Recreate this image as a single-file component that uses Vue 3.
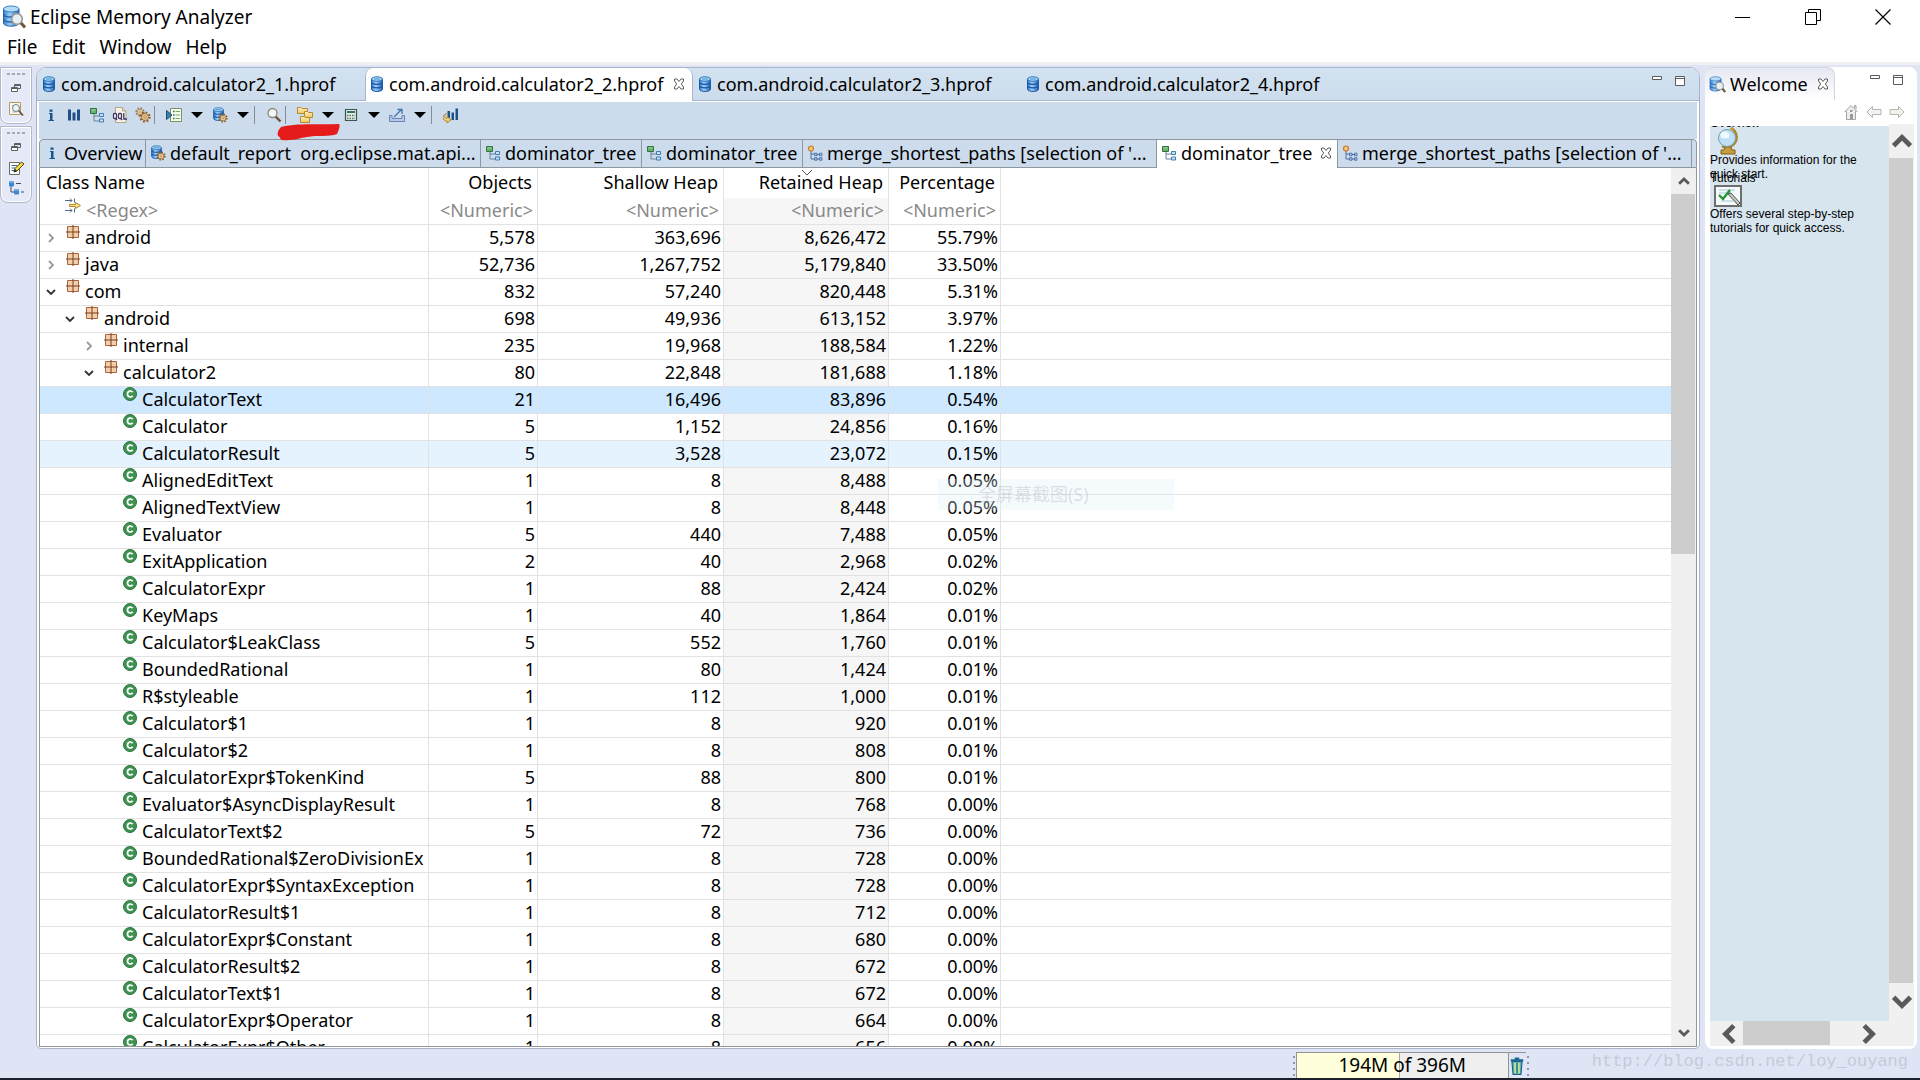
<template>
  <div class="workbench">
    <svg class="sprite" aria-hidden="true">
      <defs>
        <linearGradient id="blue" x1="0" x2="1" y1="0" y2="0">
          <stop offset="0" stop-color="#2f7fd0" />
          <stop offset="0.4" stop-color="#9fd0f5" />
          <stop offset="1" stop-color="#1c5fb8" />
        </linearGradient>
        <linearGradient id="gold" x1="0" x2="0" y1="0" y2="1">
          <stop offset="0" stop-color="#fff3c4" />
          <stop offset="1" stop-color="#edc55c" />
        </linearGradient>
      </defs>
      <symbol id="db" viewBox="0 0 14 16">
        <path d="M1.5 3v10c0 1.500 2.500 2.500 5.500 2.500s5.500-1 5.500-2.500V3z" fill="url(#blue)" stroke="#1d5ca8" />
        <path d="M1.500 6c0 1.500 2.500 2.300 5.500 2.300s5.500-.8 5.500-2.300M1.500 9.500c0 1.500 2.500 2.300 5.500 2.300s5.500-.8 5.500-2.300" fill="none" stroke="#1b55a4" stroke-width="1.200" />
        <ellipse cx="7" cy="3" rx="5.500" ry="2.200" fill="#a9d8f6" stroke="#2f78be" />
        <path d="M4 3h6" stroke="#4d93cc" />
      </symbol>
      <symbol id="dbsearch" viewBox="0 0 24 24">
        <path d="M1.500 4v14c0 2 3.500 3.200 7.500 3.200s8-1.200 8-3.200V4z" fill="url(#blue)" stroke="#2864ad" />
        <path d="M1.500 9c0 2 3.500 3 7.500 3s8-1 8-3M1.500 14c0 2 3.500 3 7.500 3s8-1 8-3" fill="none" stroke="#2560ab" stroke-width="1.400" />
        <ellipse cx="9.200" cy="4" rx="7.800" ry="3" fill="#b4dcf6" stroke="#3a7fc0" />
        <circle cx="15" cy="14" r="5.300" fill="#e6f0f6" stroke="#9b9c96" stroke-width="1.700" />
        <path d="M19 18l4 4.500" stroke="#6c5a38" stroke-width="3" />
      </symbol>
      <symbol id="info" viewBox="0 0 16 16">
        <path d="M6 6h3.500v7H11v1H5.500v-1H7V7H6zM6.500 2.500h3v2.200h-3z" fill="#15568f" />
      </symbol>
      <symbol id="bars" viewBox="0 0 16 16">
        <path d="M2 2.500h3v11H2zM6.500 5.500h3v8h-3zM11 2.500h3v11h-3z" fill="#1e4f86" />
      </symbol>
      <symbol id="tree" viewBox="0 0 16 16">
        <path d="M5 7v7h5M5 9h5" fill="none" stroke="#6a7f95" />
        <path d="M1.500 1.500h6v5h-6z" fill="#62b06a" stroke="#33733c" />
        <path d="M2.500 2.500h4v1h-4z" fill="#a9dcab" />
        <path d="M10.500 6.500h4v3h-4zM10.500 12h4v3h-4z" fill="#c9e2f6" stroke="#3f7db7" />
      </symbol>
      <symbol id="paths" viewBox="0 0 16 16">
        <path d="M4 6v8h4M4 9h4" fill="none" stroke="#4b6c9e" />
        <circle cx="4" cy="3.500" r="2.500" fill="#f7c684" stroke="#c97a24" stroke-width="1.200" />
        <path d="M10 9.500h4M10 14h4" stroke="#3f65a3" />
        <path d="M7.500 8.200h2.500v2.500H7.500zM12.500 8.200H15v2.500h-2.500zM7.500 12.700h2.500v2.500H7.500zM12.500 12.700H15v2.500h-2.500z" fill="#a9c2e2" stroke="#3f65a3" stroke-width=".8" />
      </symbol>
      <symbol id="oql" viewBox="0 0 16 16">
        <path d="M3.500.5h7l3.500 3.500v11.500h-10.500z" fill="#f6f4ea" stroke="#b5a783" />
        <path d="M10.500.5v3.500H14" fill="#e8dab5" stroke="#b5a783" />
        <rect x="1.500" y="6.500" width="3" height="5" rx="1" fill="#fff" stroke="#3f3565" stroke-width="1.300" />
        <rect x="6.500" y="6.500" width="3" height="5" rx="1" fill="#fff" stroke="#3f3565" stroke-width="1.300" />
        <path d="M3.500 11l1.500 2M8.500 11l1.500 2M11.800 6v6H15" fill="none" stroke="#3f3565" stroke-width="1.300" />
      </symbol>
      <symbol id="gear" viewBox="0 0 16 16">
        <circle cx="8" cy="8" r="6.200" fill="none" stroke="#8a5a23" stroke-width="2.600" stroke-dasharray="2.400 2.470" />
        <circle cx="8" cy="8" r="4.600" fill="#f6d9a0" stroke="#96622a" stroke-width="1.300" />
        <circle cx="8" cy="8" r="1.700" fill="#fff" stroke="#8a5a23" />
      </symbol>
      <symbol id="gears" viewBox="0 0 16 16">
        <use href="#gear" width="10" height="10" opacity=".8" />
        <use href="#gear" x="4" y="4" width="12" height="12" />
      </symbol>
      <symbol id="dbgear" viewBox="0 0 16 16">
        <use href="#db" width="13" height="14" />
        <use href="#gear" x="6" y="6" width="10" height="10" />
      </symbol>
      <symbol id="run" viewBox="0 0 16 16">
        <path d="M4.500 1.500h11v13h-11z" fill="#f7fbee" stroke="#7c8f66" />
        <path d="M7 4.500h1.500M7 8h1.500M7 11.500h1.500" stroke="#2d6e46" stroke-width="1.500" />
        <path d="M9.500 4.500H14M9.500 8H14M9.500 11.500H14" stroke="#69a96b" />
        <path d="M.5 3.500v9L6 8z" fill="#3d7fa6" stroke="#1c4d79" />
      </symbol>
      <symbol id="search" viewBox="0 0 16 16">
        <path d="M9.500 9.500l5 5" stroke="#6d5137" stroke-width="2.400" />
        <circle cx="6.500" cy="6" r="4.500" fill="#f2f7f8" stroke="#8c8870" stroke-width="1.300" />
      </symbol>
      <symbol id="folders" viewBox="0 0 16 16">
        <g fill="url(#gold)" stroke="#b98a2c">
          <path d="M.5.5h3.500l1 1h5.500v5H.5z" />
          <path d="M7.500 4.500h3l1 1h4v5h-8z" />
          <path d="M3.500 9.500h3.500l1 1h4.500v5h-9z" />
        </g>
      </symbol>
      <symbol id="calc" viewBox="0 0 16 16">
        <path d="M2.500 2.500h11v11h-11z" fill="#e3ebde" stroke="#3d5350" stroke-width="1.200" />
        <path d="M4 4h8v2H4z" fill="#34735d" />
        <path d="M4 8.500h8M4 11.500h8" stroke="#50747e" stroke-width="1.500" stroke-dasharray="1.500 1" />
      </symbol>
      <symbol id="export" viewBox="0 0 16 16">
        <path d="M.5 8.500h2.500v3h10v-3h2.500v6H.5z" fill="#b8cae5" stroke="#6885b4" />
        <path d="M5 10l7-7M8.500 2.500H13V7" fill="none" stroke="#4373ac" stroke-width="1.300" />
      </symbol>
      <symbol id="compare" viewBox="0 0 16 16">
        <path d="M4.500 4H7v9H4.500zM8.500 5.500H11V13H8.500zM12.500 1.500H15V13h-2.500z" fill="#1f5189" />
        <path d="M3.500 6.500C1 8 1 11.500 4 11.500V9.500l4 3.500-4 3v-2C-1 14-1 8 3.500 6.500z" fill="url(#gold)" stroke="#b4862c" />
      </symbol>
      <symbol id="close" viewBox="0 0 12 12">
        <path d="M1.500 1h2.500l2 2.500L8 1h2.500v2L8.300 6l2.200 3v2H8L6 8.500 4 11H1.500V9l2.200-3-2.200-3z" fill="#fff" stroke="#5d5d5d" />
      </symbol>
      <symbol id="package" viewBox="0 0 14 14">
        <path d="M1.500 1.500h11v11h-11z" fill="#f2cfaa" stroke="#a8653c" />
        <path d="M7 0v14M0 7h14" stroke="#7a3f20" />
      </symbol>
      <symbol id="class" viewBox="0 0 14 14">
        <circle cx="7" cy="7" r="6.500" fill="#3d9350" stroke="#2b7140" />
        <path d="M9.600 5.200C8.500 3.400 4.500 3.500 4.500 7s4 3.600 5.100 1.800" fill="none" stroke="#fff" stroke-width="1.700" />
      </symbol>
      <symbol id="filter" viewBox="0 0 16 16">
        <path d="M0 2.500h7M0 12.500h7M5 .5l2 2-2 2M5 10.500l2 2-2 2M9.500.5v4M9.500 10.500v4" fill="none" stroke="#51697f" />
        <path d="M4.500 6.500h6V4.500l5 3-5 3v-2h-6z" fill="#fbe389" stroke="#b3862b" />
      </symbol>
      <symbol id="right" viewBox="0 0 10 10"><path d="M3 1l4 4-4 4" fill="none" stroke="#9a9a9a" stroke-width="1.800" /></symbol>
      <symbol id="down" viewBox="0 0 10 10"><path d="M1 3l4 4 4-4" fill="none" stroke="#333" stroke-width="1.800" /></symbol>
      <symbol id="restore" viewBox="0 0 10 10">
        <path d="M3.500 4V1.500h6v4H7M3.500 2.500h6" fill="none" stroke="#5e5e5e" />
        <path d="M.5 4.500h6v4h-6zM.5 5.500h6" fill="#fff" stroke="#5e5e5e" />
      </symbol>
      <symbol id="inspector" viewBox="0 0 16 16">
        <path d="M1.500 1.500h11v12h-11z" fill="#fbfaf2" stroke="#b79a5b" />
        <path d="M4 4.500h6M4 11h5" stroke="#9bb3cc" />
        <circle cx="8" cy="7" r="3.500" fill="#eef4f6" stroke="#6f7f86" />
        <path d="M10.500 9.500l4.500 5" stroke="#6b4d35" stroke-width="1.800" />
      </symbol>
      <symbol id="notes" viewBox="0 0 16 16">
        <path d="M1.500 2.500h10v12h-10z" fill="#fff" stroke="#6c6c58" />
        <path d="M3.500 5.500h6M3.500 8h4M3.500 10.500h3" stroke="#39669a" />
        <path d="M6 12l1-3.500L13.500 2 16 4 9 11z" fill="#f4dc3a" stroke="#4b4625" />
        <path d="M6 12l3-1-2-2z" fill="#222" />
      </symbol>
      <symbol id="navigator" viewBox="0 0 16 16">
        <path d="M3 6v6h3M8 3.500h5M13 12h3" fill="none" stroke="#3f4c60" />
        <rect x="1" y="1" width="5" height="5.500" rx="1" fill="#3d86d0" />
        <rect x="6" y="9" width="5" height="5.500" rx="1" fill="#3d86d0" />
        <path d="M1.500 2h4M6.500 10h4" stroke="#a6d2f2" />
      </symbol>
      <symbol id="home" viewBox="0 0 16 16">
        <path d="M1.500 8L8 1.500 14.500 8M3.500 7v8.500h9V7M11.500 4V1.500h1.500v4" fill="#ededed" stroke="#a3a3a3" />
        <path d="M7 10h3v5H7z" fill="#999" />
        <path d="M7 6h2.500v2H7z" fill="#999" />
      </symbol>
      <symbol id="back" viewBox="0 0 16 16">
        <path d="M1 8l5.500-5.500v3H15v5H6.500v3z" fill="#f1f1ee" stroke="#b5b5b0" />
      </symbol>
      <symbol id="forward" viewBox="0 0 16 16">
        <path d="M15 8L9.500 2.500v3H1v5h8.500v3z" fill="#f1f1ee" stroke="#b5b5b0" />
      </symbol>
      <symbol id="globe" viewBox="0 0 24 28">
        <path d="M15 1c6 3 8 12 2 17-3 3-8 3-11 1" fill="none" stroke="#a6862b" stroke-width="2.400" />
        <path d="M9 20h6l1 3h3v4H5v-4h3z" fill="#c79c3d" stroke="#80601c" />
        <circle cx="11" cy="11" r="8.500" fill="#bfe0f4" stroke="#7d9cab" />
        <ellipse cx="9" cy="8" rx="4.500" ry="3.500" fill="#effaff" />
        <circle cx="16" cy="2" r="1.800" fill="#c79c3d" />
      </symbol>
      <symbol id="tutorial" viewBox="0 0 28 22">
        <path d="M1 1h26v20H1z" fill="#f4fafa" stroke="#6e6e6e" stroke-width="2" />
        <path d="M5 5h16M5 8h12M7 16h12" stroke="#a7cad2" />
        <path d="M5 10l4 4 7-9" fill="none" stroke="#279236" stroke-width="2.400" />
        <path d="M14 9l3-1 9 10-2 2z" fill="#c5c9c4" stroke="#50584f" />
      </symbol>
      <symbol id="trash" viewBox="0 0 12 16">
        <path d="M1.500 4h9l-1 11.500h-7z" fill="#5cb3b0" stroke="#1c5f8c" />
        <path d="M4.300 5v9.500M7.700 5v9.500" stroke="#d7ee8e" stroke-width="1.300" />
        <path d="M6 5v9.500" stroke="#236b8f" />
        <path d="M.5 3h11M4 1.500h4" stroke="#1c6795" stroke-width="2" />
      </symbol>
      <symbol id="min" viewBox="0 0 12 14"><path d="M1.500 2.500h9v3h-9z" fill="#fff" stroke="#5a5a5a" /></symbol>
      <symbol id="max" viewBox="0 0 12 14"><path d="M1.500 2.500h9v9h-9zM1.500 4.500h9" fill="#fff" stroke="#5a5a5a" /></symbol>
      <symbol id="chevron" viewBox="0 0 20 20"><path d="M3 14l7-7 7 7" fill="none" stroke="#5a5a5a" stroke-width="4" /></symbol>
    </svg>

    <header class="title-bar">
      <svg class="app-icon"><use href="#dbsearch" /></svg>
      <h1>Eclipse Memory Analyzer</h1>
      <div class="window-buttons">
        <button aria-label="Minimize"><svg viewBox="0 0 16 16"><path d="M0 8.500h15" stroke="#000" /></svg></button>
        <button aria-label="Restore"><svg viewBox="0 0 16 16"><path d="M.5 3.500h11v12H.5zM3.500 3.500v-3h12v11h-4" fill="none" stroke="#000" /></svg></button>
        <button aria-label="Close"><svg viewBox="0 0 16 16"><path d="M.5.5l15 15M15.500.5l-15 15" stroke="#000" stroke-width="1.200" /></svg></button>
      </div>
    </header>

    <nav class="menu-bar">
      <button v-for="item in menus" :key="item">{{ item }}</button>
    </nav>

    <div class="main">
      <aside class="trim">
        <div v-for="(group, i) in trim" :key="i" class="trim-group">
          <span class="grip"></span>
          <button v-for="icon in group" :key="icon" :aria-label="icon">
            <svg :class="{ small: icon === 'restore' }"><use :href="'#' + icon" /></svg>
          </button>
        </div>
      </aside>

      <section class="editor">
        <div class="editor-tabs">
          <button v-for="n in 4" :key="n" class="editor-tab" :class="{ active: n === 2 }">
            <svg class="db-icon"><use href="#db" /></svg>
            <span>com.android.calculator2_{{ n }}.hprof</span>
            <svg v-if="n === 2" class="close-icon"><use href="#close" /></svg>
          </button>
          <div class="part-buttons">
            <button aria-label="Minimize editor"><svg><use href="#min" /></svg></button>
            <button aria-label="Maximize editor"><svg><use href="#max" /></svg></button>
          </div>
        </div>

        <div class="editor-body">
          <div class="toolbar">
            <template v-for="(tool, i) in tools" :key="i">
              <span v-if="tool === '|'" class="separator"></span>
              <button v-else-if="tool === 'v'" aria-label="Open menu"><span class="caret"></span></button>
              <button v-else :aria-label="tool"><svg><use :href="'#' + tool" /></svg></button>
            </template>
            <svg class="marker" viewBox="0 0 64 18">
              <path d="M4 4C20 0 38 2 61 1c2 0 2 2 1 5l-2 5c-8 3-20 1-30 3-8 1-14 4-25 3-2 0-1-3-4-4C0 10 1 7 4 4z" fill="#e51b1c" />
            </svg>
          </div>

          <div class="page-tabs">
            <button
              v-for="(tab, i) in pageTabs"
              :key="i"
              class="page-tab"
              :class="[tab.size, { active: tab.active }]"
            >
              <svg><use :href="'#' + tab.icon" /></svg>
              <span>{{ tab.label }}</span>
              <svg v-if="tab.active" class="close-icon"><use href="#close" /></svg>
            </button>
          </div>

          <div class="result">
            <div class="table-wrap">
              <table>
                <colgroup>
                  <col class="col-name" />
                  <col class="col-objects" />
                  <col class="col-shallow" />
                  <col class="col-retained" />
                  <col class="col-percent" />
                  <col />
                </colgroup>
                <thead>
                  <tr>
                    <th>Class Name</th>
                    <th>Objects</th>
                    <th>Shallow Heap</th>
                    <th class="sorted">Retained Heap<svg class="sort-mark" viewBox="0 0 12 6"><path d="M1 0l5 5 5-5" fill="none" stroke="#555" /></svg></th>
                    <th>Percentage</th>
                    <th></th>
                  </tr>
                </thead>
                <tbody>
                  <tr class="filter-row">
                    <td><div class="name"><svg class="filter-icon"><use href="#filter" /></svg><span>&lt;Regex&gt;</span></div></td>
                    <td v-for="n in 4" :key="n">&lt;Numeric&gt;</td>
                    <td></td>
                  </tr>
                  <tr v-for="(row, i) in rows" :key="i" :class="row.state">
                    <td>
                      <div class="name" :class="'level-' + row.level">
                        <button v-if="row.toggle" class="twistie" :aria-label="row.toggle">
                          <svg><use :href="'#' + row.toggle" /></svg>
                        </button>
                        <span v-else class="twistie"></span>
                        <svg class="node-icon"><use :href="row.toggle ? '#package' : '#class'" /></svg>
                        <span>{{ row.name }}</span>
                      </div>
                    </td>
                    <td>{{ row.objects }}</td>
                    <td>{{ row.shallow }}</td>
                    <td>{{ row.retained }}</td>
                    <td>{{ row.percent }}</td>
                    <td></td>
                  </tr>
                </tbody>
              </table>
              <div class="ghost-menu">全屏幕截图(S)</div>
            </div>
            <div class="scrollbar">
              <button aria-label="Scroll up"><svg><use href="#chevron" /></svg></button>
              <span class="thumb"></span>
              <button aria-label="Scroll down"><svg class="flip"><use href="#chevron" /></svg></button>
            </div>
          </div>
        </div>
      </section>

      <section class="welcome">
        <div class="welcome-head">
          <button class="welcome-tab">
            <svg class="welcome-icon"><use href="#dbsearch" /></svg>
            <span>Welcome</span>
            <svg class="close-icon"><use href="#close" /></svg>
          </button>
          <div class="part-buttons">
            <button aria-label="Minimize view"><svg><use href="#min" /></svg></button>
            <button aria-label="Maximize view"><svg><use href="#max" /></svg></button>
          </div>
        </div>
        <div class="welcome-nav">
          <button v-for="icon in ['home', 'back', 'forward']" :key="icon" :aria-label="icon">
            <svg><use :href="'#' + icon" /></svg>
          </button>
        </div>
        <div class="welcome-body">
          <div class="welcome-page">
            <a class="page-link" href="#overview"><span>Overview</span><svg class="globe"><use href="#globe" /></svg></a>
            <p>Provides information for the quick start.</p>
            <a class="page-link" href="#tutorials"><span>Tutorials</span><svg class="tutorial"><use href="#tutorial" /></svg></a>
            <p>Offers several step-by-step tutorials for quick access.</p>
          </div>
          <div class="scrollbar big">
            <button aria-label="Scroll up"><svg><use href="#chevron" /></svg></button>
            <span class="thumb"></span>
            <button aria-label="Scroll down"><svg class="flip"><use href="#chevron" /></svg></button>
          </div>
          <div class="scrollbar horizontal">
            <button aria-label="Scroll left"><svg class="left"><use href="#chevron" /></svg></button>
            <span class="thumb"></span>
            <button aria-label="Scroll right"><svg class="turn"><use href="#chevron" /></svg></button>
          </div>
        </div>
      </section>
    </div>

    <footer class="status-bar">
      <span class="dots"></span>
      <div class="heap">
        <span class="heap-used"></span>
        <span class="heap-text">194M of 396M</span>
      </div>
      <button class="gc" aria-label="Run Garbage Collector"><svg><use href="#trash" /></svg></button>
      <span class="dots"></span>
      <span class="watermark">http://blog.csdn.net/loy_ouyang</span>
    </footer>
  </div>
</template>

<script setup>
const menus = ['File', 'Edit', 'Window', 'Help'];

const trim = [
  ['restore', 'inspector'],
  ['restore', 'notes', 'navigator'],
];

// '|' is a separator, 'v' a drop-down arrow
const tools = [
  'info', 'bars', 'tree', 'oql', 'gears', '|',
  'run', 'v', 'dbgear', 'v', '|',
  'search', '|',
  'folders', 'v', 'calc', 'v', 'export', 'v', '|',
  'compare',
];

const pageTabs = [
  { icon: 'info', label: 'Overview', size: 'tiny' },
  { icon: 'dbgear', label: 'default_report  org.eclipse.mat.api...', size: 'large' },
  { icon: 'tree', label: 'dominator_tree', size: 'small' },
  { icon: 'tree', label: 'dominator_tree', size: 'small' },
  { icon: 'paths', label: "merge_shortest_paths [selection of '...", size: 'wide' },
  { icon: 'tree', label: 'dominator_tree', size: 'medium', active: true },
  { icon: 'paths', label: "merge_shortest_paths [selection of '...", size: 'wide' },
];

const row = (level, toggle, name, objects, shallow, retained, percent, state = '') => ({
  level, toggle, name, objects, shallow, retained, percent, state,
});

const rows = [
  row(0, 'right', 'android', '5,578', '363,696', '8,626,472', '55.79%'),
  row(0, 'right', 'java', '52,736', '1,267,752', '5,179,840', '33.50%'),
  row(0, 'down', 'com', '832', '57,240', '820,448', '5.31%'),
  row(1, 'down', 'android', '698', '49,936', '613,152', '3.97%'),
  row(2, 'right', 'internal', '235', '19,968', '188,584', '1.22%'),
  row(2, 'down', 'calculator2', '80', '22,848', '181,688', '1.18%'),
  row(3, '', 'CalculatorText', '21', '16,496', '83,896', '0.54%', 'selected'),
  row(3, '', 'Calculator', '5', '1,152', '24,856', '0.16%'),
  row(3, '', 'CalculatorResult', '5', '3,528', '23,072', '0.15%', 'hovered'),
  row(3, '', 'AlignedEditText', '1', '8', '8,488', '0.05%'),
  row(3, '', 'AlignedTextView', '1', '8', '8,448', '0.05%'),
  row(3, '', 'Evaluator', '5', '440', '7,488', '0.05%'),
  row(3, '', 'ExitApplication', '2', '40', '2,968', '0.02%'),
  row(3, '', 'CalculatorExpr', '1', '88', '2,424', '0.02%'),
  row(3, '', 'KeyMaps', '1', '40', '1,864', '0.01%'),
  row(3, '', 'Calculator$LeakClass', '5', '552', '1,760', '0.01%'),
  row(3, '', 'BoundedRational', '1', '80', '1,424', '0.01%'),
  row(3, '', 'R$styleable', '1', '112', '1,000', '0.01%'),
  row(3, '', 'Calculator$1', '1', '8', '920', '0.01%'),
  row(3, '', 'Calculator$2', '1', '8', '808', '0.01%'),
  row(3, '', 'CalculatorExpr$TokenKind', '5', '88', '800', '0.01%'),
  row(3, '', 'Evaluator$AsyncDisplayResult', '1', '8', '768', '0.00%'),
  row(3, '', 'CalculatorText$2', '5', '72', '736', '0.00%'),
  row(3, '', 'BoundedRational$ZeroDivisionEx', '1', '8', '728', '0.00%'),
  row(3, '', 'CalculatorExpr$SyntaxException', '1', '8', '728', '0.00%'),
  row(3, '', 'CalculatorResult$1', '1', '8', '712', '0.00%'),
  row(3, '', 'CalculatorExpr$Constant', '1', '8', '680', '0.00%'),
  row(3, '', 'CalculatorResult$2', '1', '8', '672', '0.00%'),
  row(3, '', 'CalculatorText$1', '1', '8', '672', '0.00%'),
  row(3, '', 'CalculatorExpr$Operator', '1', '8', '664', '0.00%'),
  row(3, '', 'CalculatorExpr$Other', '1', '8', '656', '0.00%'),
];
</script>

<style>
body {
  background: #e0e5f5;
}
</style>

<style scoped>
.workbench {
  height: 100vh;
  display: flex;
  flex-direction: column;
  overflow: hidden;
  box-sizing: border-box;
  border-bottom: 2px solid #1d1f2c;
  background: #e0e5f5;
  color: #000;
  font-family: "Noto Sans", "Noto Sans CJK SC", sans-serif;
  font-size: 18px;
  line-height: 26px;
}

.workbench * {
  box-sizing: border-box;
}

button {
  margin: 0;
  padding: 0;
  border: 0;
  background: none;
  color: inherit;
  font: inherit;
  white-space: pre;
}

svg {
  display: block;
  flex: none;
  width: 16px;
  height: 16px;
}

.sprite {
  position: absolute;
  width: 0;
  height: 0;
}

/* title and menu */
.title-bar {
  display: flex;
  align-items: center;
  height: 34px;
  padding-left: 2px;
  background: #fff;
}

.title-bar .app-icon {
  width: 24px;
  height: 24px;
}

.title-bar h1 {
  margin: 0 0 0 4px;
  font-size: 19px;
  font-weight: 400;
}

.window-buttons {
  display: flex;
  margin: 0 2px 0 auto;
}

.window-buttons button {
  display: flex;
  align-items: center;
  justify-content: center;
  width: 70px;
  height: 32px;
}

.menu-bar {
  display: flex;
  gap: 14px;
  height: 31px;
  padding: 0 0 3px 7px;
  background: #fff;
  border-bottom: 3px solid #f0f0f3;
  font-size: 19px;
}

/* workbench columns */
.main {
  flex: 1;
  min-height: 0;
  display: flex;
  padding: 2px 3px 0 0;
}

.trim {
  width: 36px;
}

.trim-group {
  display: flex;
  flex-direction: column;
  align-items: center;
  gap: 4px;
  width: 32px;
  margin-bottom: 2px;
  padding: 5px 0 6px;
  border: 1px solid #b3b8cc;
  border-radius: 0 0 8px 8px;
  background: #e6eaf8;
  box-shadow: inset 0 0 0 1px #fff;
}

.trim-group button {
  display: flex;
}

.trim-group svg.small {
  width: 10px;
  height: 10px;
  margin: 4px 0;
}

.grip {
  width: 18px;
  height: 2px;
  background: repeating-linear-gradient(90deg, #a8a8b0 0 3px, transparent 3px 5px);
}

.editor {
  flex: 1;
  min-width: 0;
  display: flex;
  flex-direction: column;
  border: 1px solid #a9b3c9;
  border-radius: 10px 10px 5px 5px;
  background: #fff;
  overflow: hidden;
}

.editor-tabs {
  display: flex;
  height: 33px;
  border-bottom: 1px solid #a9b5cf;
  background: linear-gradient(#d3e2f0, #cddcec);
}

.editor-tab {
  display: flex;
  align-items: center;
  width: 328px;
  padding-left: 5px;
}

.editor-tab.active {
  height: 33px;
  padding: 0 0 1px 4px;
  border: solid #a9b5cf;
  border-width: 0 1px;
  border-radius: 8px 8px 0 0;
  background: #fff;
}

.editor-tab .db-icon {
  width: 14px;
  height: 18px;
  margin-right: 5px;
}

.close-icon {
  width: 12px;
  height: 12px;
}

.editor-tab .close-icon {
  margin-left: 10px;
}

.part-buttons {
  display: flex;
  gap: 11px;
  margin: 6px 13px 0 auto;
}

.part-buttons button {
  display: flex;
}

.part-buttons svg {
  width: 12px;
  height: 14px;
}

.editor-body {
  flex: 1;
  min-height: 0;
  display: flex;
  flex-direction: column;
  margin: 1px 2px 1px;
}

.toolbar {
  position: relative;
  display: flex;
  height: 37px;
  background: #cddcec;
}

.toolbar button {
  display: flex;
  align-items: center;
  justify-content: center;
  width: 23px;
  height: 25px;
}

.separator {
  width: 8px;
  height: 18px;
  margin-top: 4px;
  border-left: 1px solid #868c94;
}

.caret {
  border: 6px solid transparent;
  border-top-color: #000;
  border-bottom: 0;
}

.marker {
  position: absolute;
  left: 238px;
  top: 21px;
  width: 64px;
  height: 18px;
}

.page-tabs {
  display: flex;
  height: 29px;
  padding-right: 3px;
  border: 1px solid #8f979f;
  border-radius: 4px 4px 0 0;
  background: #cddcec;
}

.page-tab {
  display: flex;
  align-items: center;
  gap: 4px;
  padding: 0 0 2px 4px;
  border-right: 1px solid #8f979f;
  overflow: hidden;
}

.page-tab.tiny {
  width: 106px;
}

.page-tab.small {
  width: 161px;
}

.page-tab.medium {
  width: 181px;
}

.page-tab.large {
  width: 335px;
}

.page-tab.wide {
  width: 354px;
}

.page-tab.active {
  height: 28px;
  padding-bottom: 3px;
  background: #fff;
}

.page-tab .close-icon {
  margin-left: 4px;
}

/* dominator tree */
.result {
  flex: 1;
  min-height: 0;
  display: flex;
  border: solid #92979c;
  border-width: 0 1px 1px;
  background: #fff;
}

.table-wrap {
  position: relative;
  flex: 1;
  min-width: 0;
  overflow: hidden;
}

table {
  width: 100%;
  table-layout: fixed;
  border-collapse: separate;
  border-spacing: 0;
}

.col-name {
  width: 389px;
}

.col-objects {
  width: 109px;
}

.col-shallow {
  width: 186px;
}

.col-retained {
  width: 165px;
}

.col-percent {
  width: 112px;
}

th,
td {
  height: 27px;
  padding: 0 2px 2px 0;
  border-right: 1px solid #e2e2e2;
  border-bottom: 1px solid #e2e2e2;
  line-height: 24px;
  font-weight: 400;
  text-align: right;
  white-space: nowrap;
  overflow: hidden;
}

th {
  height: 30px;
  padding-right: 5px;
  border-bottom: 0;
}

th:first-child {
  padding-left: 6px;
  text-align: left;
}

th:last-child,
td:last-child {
  border-right: 0;
}

td:first-child {
  padding: 0;
  text-align: left;
}

td:nth-child(4) {
  background: #f6f6f6;
}

.sorted {
  position: relative;
}

.sort-mark {
  position: absolute;
  left: 77px;
  top: 2px;
  width: 12px;
  height: 6px;
}

.filter-row td {
  padding-right: 4px;
  color: #8a8a8a;
}

.selected td,
.selected td:nth-child(4) {
  background: #cde8ff;
}

.hovered td,
.hovered td:nth-child(4) {
  background: #e5f3ff;
}

.name {
  display: flex;
  height: 26px;
  overflow: hidden;
}

.name .filter-icon {
  margin: 0 5px 0 25px;
}

.twistie {
  display: flex;
  align-items: center;
  width: 20px;
  height: 26px;
  margin-left: 6px;
}

.twistie svg {
  width: 10px;
  height: 10px;
}

.node-icon {
  width: 14px;
  height: 14px;
  margin-right: 5px;
}

.level-1 {
  padding-left: 19px;
}

.level-2 {
  padding-left: 38px;
}

.level-3 {
  padding-left: 57px;
}

.ghost-menu {
  position: absolute;
  left: 898px;
  top: 311px;
  width: 236px;
  height: 31px;
  padding-left: 40px;
  background: rgba(222, 240, 250, 0.3);
  color: rgba(120, 130, 135, 0.22);
  line-height: 31px;
}

/* scrollbars */
.scrollbar {
  display: flex;
  flex-direction: column;
  width: 25px;
  background: #f0f0f0;
}

.scrollbar button {
  display: flex;
  align-items: center;
  justify-content: center;
  width: 100%;
  height: 26px;
}

.scrollbar svg {
  width: 14px;
  height: 14px;
}

.scrollbar .thumb {
  flex: none;
  width: 24px;
  height: 41%;
  margin-bottom: auto;
  background: #cdcdcd;
}

.scrollbar .flip {
  transform: rotate(180deg);
}

.scrollbar .left {
  transform: rotate(-90deg);
}

.scrollbar .turn {
  transform: rotate(90deg);
}

/* welcome view */
.welcome {
  width: 212px;
  margin-left: 5px;
  display: flex;
  flex-direction: column;
  padding: 0 3px 3px 5px;
  border-radius: 8px;
  background: #fff;
}

.welcome-head {
  display: flex;
  height: 33px;
  margin: 0 -3px 0 -5px;
}

.welcome-tab {
  display: flex;
  align-items: center;
  width: 130px;
  padding-left: 4px;
  border: solid #d3d6e0;
  border-width: 1px 1px 0 0;
  border-radius: 8px 8px 0 0;
  background: linear-gradient(#e6e8f2, #fff);
}

.welcome-tab .welcome-icon {
  width: 17px;
  height: 17px;
  margin-right: 4px;
}

.welcome-tab .close-icon {
  margin-left: 9px;
}

.welcome-nav {
  display: flex;
  justify-content: flex-end;
  gap: 7px;
  height: 24px;
  padding: 0 9px 0 0;
}

.welcome-nav button {
  display: flex;
  align-items: center;
}

.welcome-body {
  flex: 1;
  min-height: 0;
  display: grid;
  grid-template: minmax(0, 1fr) 25px / minmax(0, 1fr) 25px;
  background: #f0f0f0;
}

.welcome-page {
  overflow: hidden;
  padding-right: 24px;
  border-top: 2px solid #fff;
  background: #d7e5ef;
  font-family: "Liberation Sans", sans-serif;
  font-size: 12px;
  line-height: 14px;
}

.welcome-page p {
  margin: 0;
}

.page-link {
  display: block;
  margin-top: -10px;
  color: #000;
  text-decoration: none;
}

.page-link span {
  display: block;
}

.globe {
  width: 24px;
  height: 28px;
  margin: -3px 0 -2px 6px;
}

.tutorial {
  width: 28px;
  height: 22px;
  margin-left: 4px;
}

.scrollbar.big button {
  height: 34px;
}

.scrollbar.big svg,
.scrollbar.horizontal svg {
  width: 24px;
  height: 24px;
}

.scrollbar.big .thumb {
  flex: 1;
  margin-bottom: 0;
}

.scrollbar.big button:last-child {
  height: 38px;
}

.scrollbar.horizontal {
  flex-direction: row;
  width: auto;
  padding: 0 6px 0 5px;
}

.scrollbar.horizontal button {
  width: 28px;
  height: 25px;
}

.scrollbar.horizontal .thumb {
  width: 87px;
  height: 24px;
  margin: 0 auto 0 0;
}

/* status line */
.status-bar {
  display: flex;
  justify-content: flex-end;
  height: 29px;
  padding: 3px 12px 0 0;
}

.dots {
  width: 2px;
  height: 20px;
  margin: 4px 1px 0;
  background: repeating-linear-gradient(#9297a6 0 2px, transparent 2px 6px);
}

.heap {
  position: relative;
  display: flex;
  width: 213px;
  border: solid #959595;
  border-width: 1px 1px 0;
  background: #efefef;
}

.heap-used {
  width: 49%;
  background: #ffffdc;
  border-right: 1px solid #a5a5a5;
}

.heap-text {
  position: absolute;
  inset: 0;
  font-size: 19px;
  line-height: 24px;
  text-align: center;
}

.gc {
  display: flex;
  align-items: center;
  justify-content: center;
  width: 17px;
  border-top: 1px solid #959595;
}

.gc svg {
  width: 14px;
  height: 18px;
}

.watermark {
  margin-left: 62px;
  color: #c6cad8;
  font-family: "Liberation Mono", monospace;
  font-size: 17px;
  line-height: 20px;
}
</style>
